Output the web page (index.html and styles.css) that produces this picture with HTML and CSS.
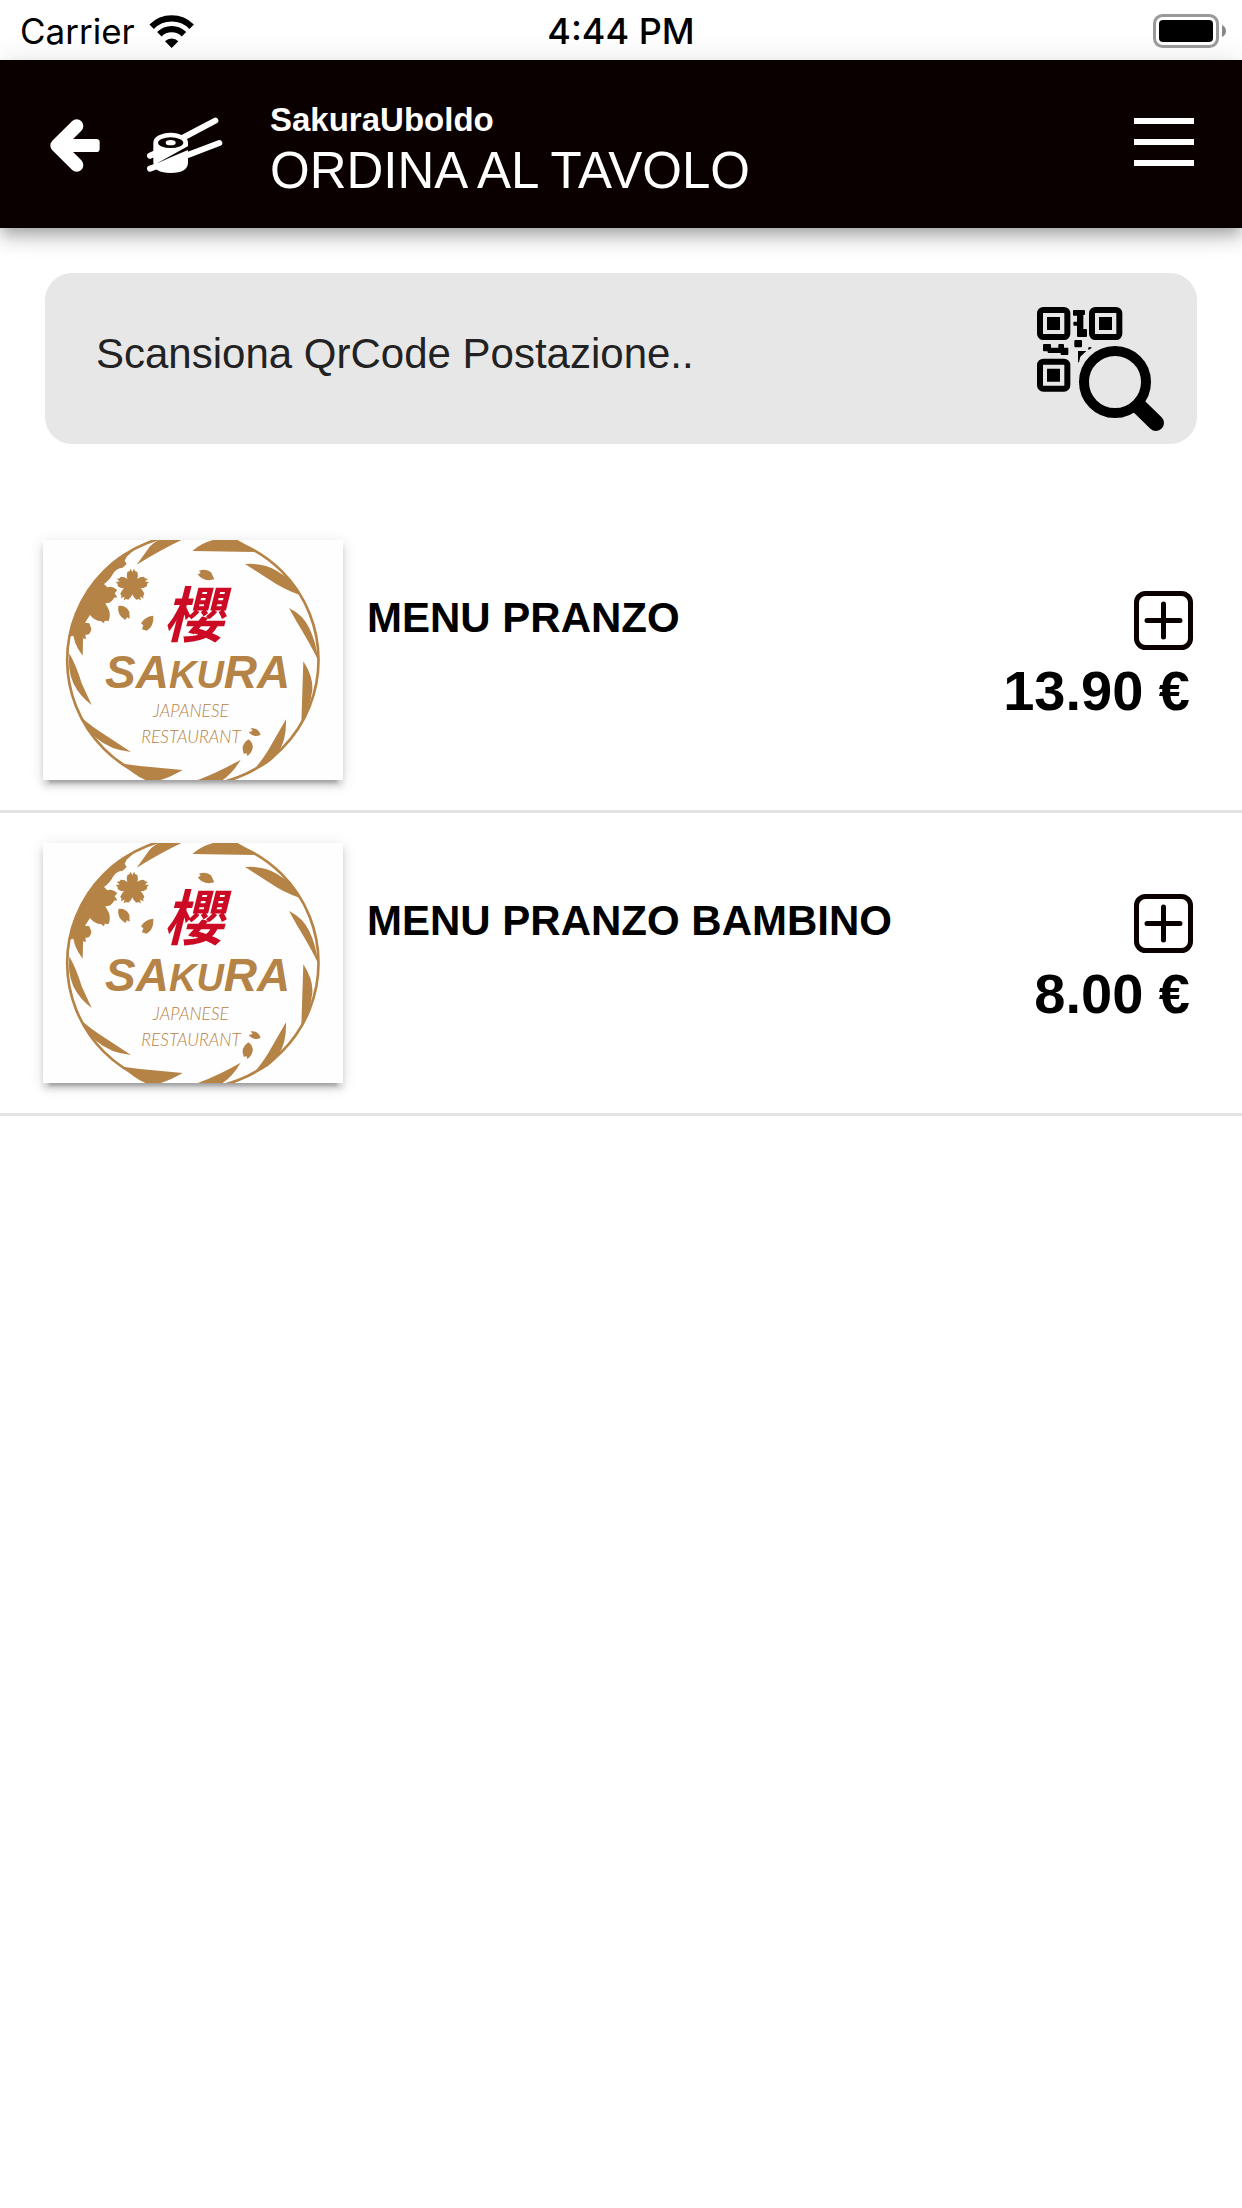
FILE: index.html
```html
<!DOCTYPE html>
<html lang="it">
<head>
    <meta charset="utf-8">
    <meta name="viewport" content="width=device-width, initial-scale=1">
    <title>SakuraUboldo - Ordina al tavolo</title>
    <link rel="stylesheet" href="styles.css">
</head>
<body>
    <!-- Shared drawings -->
    <svg class="defs" aria-hidden="true">
        <symbol id="plus" viewBox="0 0 59 59">
            <rect x="2.5" y="2.5" width="54" height="54" rx="9" fill="none" stroke="currentColor" stroke-width="5"/>
            <path d="M29.5 13v33M13 29.5h33" stroke="currentColor" stroke-width="5" stroke-linecap="round"/>
        </symbol>
        <symbol id="wreath" viewBox="39 60 900 720">
            <g fill="#b58345">
                <circle cx="488.500" cy="420" r="377" fill="none" stroke="#b58345" stroke-width="8"/>
                <!-- leaves around the ring -->
                <path d="M320 134L352 90Q366 66 400 55L465 55Q400 85 320 134Z"/>
                <path d="M487 93Q520 62 575 55L612 55Q650 72 672 96Z"/>
                <path d="M645 132Q700 128 740 152Q790 180 808 224Q760 208 720 180Z"/>
                <path d="M777 264Q820 285 838 325Q858 365 864 420Q840 370 800 305Z"/>
                <path d="M820 424Q850 470 847 510Q840 565 814 608Z"/>
                <path d="M768 598Q770 660 745 697Q720 735 670 750Q690 730 715 690Z"/>
                <path d="M632 719Q605 765 570 785L490 785Q560 760 632 719Z"/>
                <path d="M458 750Q410 778 375 784L355 784Q310 765 278 731L330 738Z"/>
                <path d="M303 696Q240 690 200 655Q170 630 156 594Q185 620 230 648Z"/>
                <path d="M185 555Q150 530 130 490Q112 450 118 400Q140 440 155 490Z"/>
                <path d="M158 407Q128 370 128 325L160 325Z"/>
                <!-- blossoms -->
                <path d="M312 90L265 112Q190 170 150 250Q120 310 118 350L148 342L162 356L168 356L166 344Q182 346 184 326L178 310L165 308L180 285Q195 303 212 303L222 310L224 302L236 303Q243 285 236 268L226 250Q245 250 252 233L262 232L254 220L262 210Q245 196 232 202L222 192Q240 180 250 160Q258 145 278 143L290 132L284 122L290 110Z"/>
                <g transform="translate(307 197)">
                    <path id="petal" d="M0 6Q-22-20-15-41L-8-44-5-51 0-40 5-51 8-44 15-41Q22-20 0 6Z"/>
                    <use href="#petal" transform="rotate(72)"/>
                    <use href="#petal" transform="rotate(144)"/>
                    <use href="#petal" transform="rotate(216)"/>
                    <use href="#petal" transform="rotate(288)"/>
                </g>
                <path d="M503 163L512 159L507 152Q530 145 543 157L553 178Q520 187 503 163Z"/>
                <path d="M265 258Q287 255 298 275L299 296L291 292L286 300Q260 285 265 258Z"/>
                <path d="M370 287Q343 290 333 310L340 316L336 328L350 332Q372 320 370 287Z"/>
                <path d="M656 636L668 633L662 625Q683 622 692 644Q672 655 656 636Z"/>
                <path d="M655 658Q670 668 668 685Q664 700 652 708L650 700L641 701Q630 675 655 658Z"/>
            </g>
        </symbol>
    </svg>

    <div class="status">
        <div class="carrier">
            <span>Carrier</span>
            <svg width="45" height="33" viewBox="448 38 135 99" aria-hidden="true">
                <path d="M456 73A85 85 0 0 1 576 73M479 96A52 52 0 0 1 553 96" fill="none" stroke="#000" stroke-width="19"/>
                <path d="M516 137L496 117A28 28 0 0 1 536 117Z"/>
            </svg>
        </div>
        <span class="time">4:44 PM</span>
        <svg class="battery" width="73" height="34" viewBox="0 0 73 34" aria-hidden="true">
            <rect x="1.500" y="1.500" width="63" height="31" rx="8" fill="none" stroke="#999" stroke-width="3"/>
            <rect x="6" y="6" width="54" height="22" rx="4"/>
            <path d="M69 11Q73 13 73 17T69 23Z" fill="#888"/>
        </svg>
    </div>

    <header class="topbar">
        <button class="icon-btn" type="button" aria-label="Indietro">
            <svg width="50" height="53" viewBox="150 358 150 159">
                <path d="M230 379L171 437.500L230 496" fill="none" stroke="#fff" stroke-width="40" stroke-linecap="round" stroke-linejoin="round"/>
                <rect x="180" y="418" width="119" height="39" rx="10" fill="#fff"/>
            </svg>
        </button>
        <svg class="sushi" width="76" height="57" viewBox="440 360 228 171" aria-hidden="true">
            <path d="M459 437A52 30 0 0 1 563 437V496Q563 528 511 528T459 496Z" fill="#fff"/>
            <path d="M552 420L645 371M520 490L657 438M449 476L462 470M449 515L480 504" stroke="#fff" stroke-width="18" stroke-linecap="round"/>
            <path d="M468 500L565 446V458L520 477Z" fill="#0a0000"/>
            <ellipse cx="511" cy="437" rx="38" ry="16" fill="#0a0000"/>
            <ellipse cx="511" cy="437" rx="15" ry="8" fill="#fff"/>
        </svg>
        <div class="titles">
            <p class="shop">SakuraUboldo</p>
            <h1>ORDINA AL TAVOLO</h1>
        </div>
        <button class="icon-btn" type="button" aria-label="Menu">
            <svg width="60" height="54" viewBox="0 0 60 54">
                <path d="M0 3h60M0 24h60M0 45h60" stroke="#fff" stroke-width="6"/>
            </svg>
        </button>
    </header>

    <main>
        <button class="scan" type="button">
            <span>Scansiona QrCode Postazione..</span>
            <svg width="127" height="124" viewBox="111 111 381 372" aria-hidden="true">
                <g fill="none" stroke="#000" stroke-width="18">
                    <rect x="120" y="120" width="82" height="81" rx="10"/>
                    <rect x="276" y="120" width="82" height="81" rx="10"/>
                    <rect x="120" y="275" width="82" height="81" rx="10"/>
                </g>
                <path d="M141 141h39v39h-39zM297 141h39v39h-39zM141 296h39v39h-39z"/>
                <g stroke="#000" stroke-width="6" stroke-linejoin="round">
                    <path d="M222 123H252V132H247V180H258V198H234V164H223V158H234V134H222Z"/>
                    <path d="M132 225H150V236H178V225H189V236H202V252H185V246H146V241H132Z"/>
                    <rect x="226" y="213" width="17" height="16"/>
                </g>
                <path d="M234 243H259L241 260L237 277H234ZM264 233L270 231L276 233L266 240Z"/>
                <circle cx="345" cy="336" r="93" fill="none" stroke="#000" stroke-width="30"/>
                <path d="M418 410L468 459" stroke="#000" stroke-width="48" stroke-linecap="round"/>
            </svg>
        </button>

        <ul class="menu">
            <li>
                <svg class="photo" viewBox="39 60 900 720">
                    <use href="#wreath" x="39" y="60" width="900" height="720"/>
                    <text class="logo-kanji" x="490" y="352">櫻</text>
                    <text class="logo-name" x="503" y="503">SA<tspan class="logo-small">KU</tspan>RA</text>
                    <text class="logo-sub" x="483" y="591">JAPANESE</text>
                    <text class="logo-sub" x="483" y="668">RESTAURANT</text>
                </svg>
                <h2>MENU PRANZO</h2>
                <div class="buy">
                    <button class="icon-btn" type="button" aria-label="Aggiungi MENU PRANZO"><svg width="59" height="59"><use href="#plus"/></svg></button>
                    <span class="price">13.90 €</span>
                </div>
            </li>
            <li>
                <svg class="photo" viewBox="39 60 900 720">
                    <use href="#wreath" x="39" y="60" width="900" height="720"/>
                    <text class="logo-kanji" x="490" y="352">櫻</text>
                    <text class="logo-name" x="503" y="503">SA<tspan class="logo-small">KU</tspan>RA</text>
                    <text class="logo-sub" x="483" y="591">JAPANESE</text>
                    <text class="logo-sub" x="483" y="668">RESTAURANT</text>
                </svg>
                <h2>MENU PRANZO BAMBINO</h2>
                <div class="buy">
                    <button class="icon-btn" type="button" aria-label="Aggiungi MENU PRANZO BAMBINO"><svg width="59" height="59"><use href="#plus"/></svg></button>
                    <span class="price">8.00 €</span>
                </div>
            </li>
        </ul>
    </main>
</body>
</html>
```
FILE: styles.css
```css
* {
    box-sizing: border-box;
}

body {
    margin: 0;
    background-color: #fff;
    color: #000;
    font-family: "Liberation Sans", Arial, sans-serif;
}

h1, h2, p, ul {
    margin: 0;
    padding: 0;
}

svg {
    display: block;
    flex-shrink: 0;
}

.defs {
    position: absolute;
    width: 0;
    height: 0;
}

.icon-btn {
    padding: 0;
    border: none;
    background: none;
    color: #0a0000;
    cursor: pointer;
}

/* Phone status bar */
.status {
    display: grid;
    grid-template-columns: 1fr auto 1fr;
    align-items: center;
    height: 60px;
    padding: 2px 16px 0;
    font-family: Inter, sans-serif;
    font-size: 35px;
}

.carrier {
    display: flex;
    align-items: center;
    gap: 14px;
    padding-left: 4px;
}

.time {
    font-size: 36px;
    font-weight: 500;
}

.battery {
    justify-self: end;
}

/* Black bar with back arrow and title */
.topbar {
    display: flex;
    align-items: center;
    height: 168px;
    padding: 2px 48px 0 50px;
    background-color: #0a0000;
    color: #fff;
    box-shadow: 0 6px 12px -3px rgba(0, 0, 0, 0.2),
        0 12px 15px 0 rgba(0, 0, 0, 0.14),
        0 3px 30px 0 rgba(0, 0, 0, 0.12);
}

.sushi {
    margin-left: 47px;
}

.titles {
    flex: 1;
    margin-left: 47px;
    padding-top: 10px;
}

.shop {
    font-size: 33px;
    font-weight: bold;
    line-height: 42px;
}

h1 {
    font-size: 51px;
    font-weight: normal;
    line-height: 60px;
}

/* QR code box */
.scan {
    display: flex;
    align-items: center;
    justify-content: space-between;
    width: calc(100% - 90px);
    margin: 45px 45px 66px;
    padding: 34px 33px 13px 51px;
    border: none;
    border-radius: 27px;
    background-color: #e7e7e7;
    color: #222;
    font-family: inherit;
    font-size: 42px;
    text-align: left;
    cursor: pointer;
}

.scan span {
    padding-bottom: 30px;
}

/* Menu list */
.menu {
    list-style: none;
}

.menu li {
    display: flex;
    align-items: flex-start;
    padding: 30px 49px 30px 43px;
    border-bottom: 3px solid #e3e3e3;
}

.photo {
    width: 300px;
    height: 240px;
    background-color: #fefefe;
    box-shadow: 0 9px 3px -6px rgba(0, 0, 0, 0.2),
        0 6px 6px 0 rgba(0, 0, 0, 0.14),
        0 3px 15px 0 rgba(0, 0, 0, 0.12);
}

h2 {
    flex: 1;
    padding: 54px 24px 0;
    font-size: 42px;
    line-height: 48px;
}

.buy {
    display: flex;
    flex-direction: column;
    align-items: flex-end;
    gap: 9px;
    padding-top: 51px;
}

.price {
    padding-right: 3px;
    font-size: 56px;
    font-weight: bold;
    line-height: 64px;
}

/* Restaurant logo lettering */
.photo text {
    fill: #b58345;
    font-style: italic;
    text-anchor: middle;
}

.photo .logo-kanji {
    fill: #cc0a24;
    font-family: "Noto Sans CJK JP", sans-serif;
    font-size: 180px;
    font-weight: bold;
}

.logo-name {
    font-size: 138px;
    font-weight: bold;
}

.logo-small {
    font-size: 114px;
}

.logo-sub {
    font-family: Lato, sans-serif;
    font-size: 52px;
    font-weight: 300;
}
```
